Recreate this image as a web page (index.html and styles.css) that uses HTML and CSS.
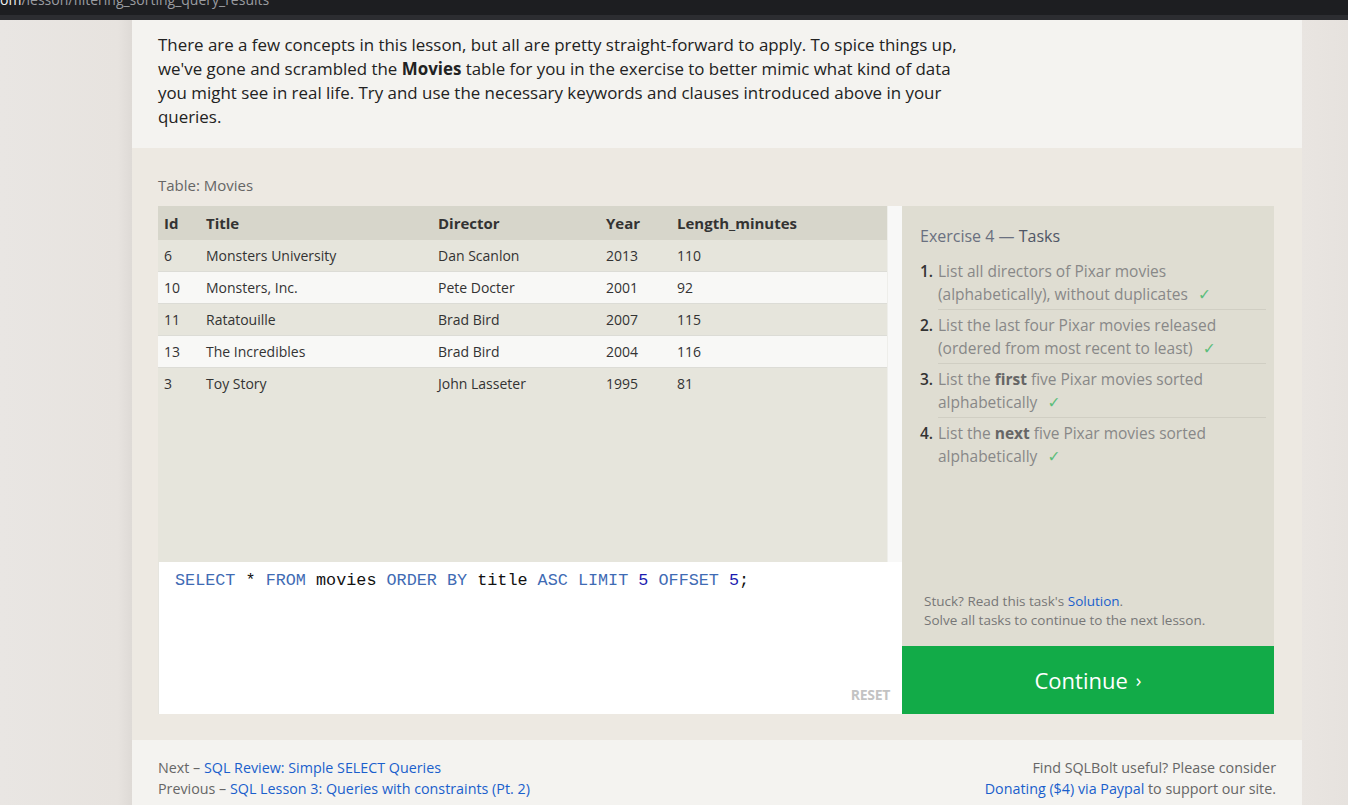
FILE: index.html
```html
<!DOCTYPE html>
<html>
<head>
<meta charset="utf-8">
<link rel="stylesheet" href="styles.css">
</head>
<body>
<div class="urlbar"><div class="urltext"><span class="host">om</span>/lesson/filtering_sorting_query_results</div></div>
<div class="urlstrip"></div>
<div class="page">
  <section class="intro">
    <p>There are a few concepts in this lesson, but all are pretty straight-forward to apply. To spice things up, we've gone and scrambled the <b>Movies</b> table for you in the exercise to better mimic what kind of data you might see in real life. Try and use the necessary keywords and clauses introduced above in your queries.</p>
  </section>
  <section class="exercise">
    <div class="label">Table: Movies</div>
    <div class="workspace">
      <div class="left">
        <div class="tablewrap">
          <div class="tablearea">
            <table class="movies">
              <thead>
                <tr><th class="c-id">Id</th><th class="c-title">Title</th><th class="c-dir">Director</th><th class="c-year">Year</th><th>Length_minutes</th></tr>
              </thead>
              <tbody>
                <tr><td>6</td><td>Monsters University</td><td>Dan Scanlon</td><td>2013</td><td>110</td></tr>
                <tr><td>10</td><td>Monsters, Inc.</td><td>Pete Docter</td><td>2001</td><td>92</td></tr>
                <tr><td>11</td><td>Ratatouille</td><td>Brad Bird</td><td>2007</td><td>115</td></tr>
                <tr><td>13</td><td>The Incredibles</td><td>Brad Bird</td><td>2004</td><td>116</td></tr>
                <tr><td>3</td><td>Toy Story</td><td>John Lasseter</td><td>1995</td><td>81</td></tr>
              </tbody>
            </table>
          </div>
          <div class="scrollgutter"></div>
        </div>
        <div class="editor">
          <div class="code"><span class="kw">SELECT</span> * <span class="kw">FROM</span> movies <span class="kw">ORDER BY</span> title <span class="kw">ASC</span> <span class="kw">LIMIT</span> <span class="num">5</span> <span class="kw">OFFSET</span> <span class="num">5</span>;</div>
          <div class="reset">RESET</div>
        </div>
      </div>
      <div class="right">
        <div class="tasks">
          <h3><span class="ex">Exercise 4 —</span> Tasks</h3>
          <ol>
            <li><span class="n">1.</span><span class="t">List all directors of Pixar movies (alphabetically), without duplicates <span class="chk">✓</span></span></li>
            <li><span class="n">2.</span><span class="t">List the last four Pixar movies released (ordered from most recent to least) <span class="chk">✓</span></span></li>
            <li><span class="n">3.</span><span class="t">List the <b>first</b> five Pixar movies sorted alphabetically <span class="chk">✓</span></span></li>
            <li><span class="n">4.</span><span class="t">List the <b>next</b> five Pixar movies sorted alphabetically <span class="chk">✓</span></span></li>
          </ol>
          <div class="help">
            <div>Stuck? Read this task's <a href="#">Solution</a>.</div>
            <div>Solve all tasks to continue to the next lesson.</div>
          </div>
        </div>
        <div class="continue">Continue <span class="arrow">›</span></div>
      </div>
    </div>
  </section>
  <section class="footer">
    <div class="nav">
      <div>Next – <a href="#">SQL Review: Simple SELECT Queries</a></div>
      <div>Previous – <a href="#">SQL Lesson 3: Queries with constraints (Pt. 2)</a></div>
    </div>
    <div class="donate">
      <div>Find SQLBolt useful? Please consider</div>
      <div><a href="#">Donating ($4) via Paypal</a> to support our site.</div>
    </div>
  </section>
</div>
</body>
</html>
```
FILE: styles.css
```css
html, body {
  margin: 0;
  padding: 0;
}
body {
  background: linear-gradient(to right, #e9e6e3 0, #e7e3df 118px, #dedad6 132px, #e9e5e1 1302px, #e6e2de 1348px);
  font-family: "Open Sans", "DejaVu Sans", sans-serif;
  color: #333;
  height: 805px;
  overflow: hidden;
}
a {
  color: #1a5fcc;
  text-decoration: none;
}
.urlbar {
  height: 15px;
  background: #1d1e21;
  overflow: hidden;
}
.urltext {
  font-family: "Open Sans", sans-serif;
  font-size: 14px;
  line-height: 20px;
  margin-top: -10px;
  color: #9a9ca0;
}
.urltext .host {
  color: #f0f0f0;
}
.urlstrip {
  height: 5px;
  background: #2c2d31;
}
.page {
  width: 1170px;
  margin-left: 132px;
}
.intro {
  background: #f4f3f0;
  padding: 13px 26px 19px;
}
.intro p {
  margin: 0;
  width: 810px;
  font-size: 16.9px;
  line-height: 24px;
  color: #222;
}
.intro b {
  font-weight: 700;
}
.exercise {
  background: #ede9e2;
  padding: 27px 28px 26px 26px;
}
.label {
  font-size: 15px;
  line-height: 20px;
  color: #666;
  margin-bottom: 11px;
}
.workspace {
  display: flex;
}
.left {
  width: 744px;
  display: flex;
  flex-direction: column;
}
.tablewrap {
  height: 356px;
  display: flex;
}
.tablearea {
  flex: 1;
  background: #e6e5dc;
}
.scrollgutter {
  width: 14px;
  background: #f8f8f7;
  border-left: 1px solid #eeeeea;
}
.movies {
  width: 100%;
  border-collapse: collapse;
  font-size: 14px;
  color: #333;
}
.movies th {
  background: #d7d6cb;
  text-align: left;
  font-weight: 700;
  font-size: 15px;
  height: 34px;
  padding: 0;
  color: #333;
}
.movies td {
  height: 31px;
  padding: 0;
  border-bottom: 1px solid #dcdcd6;
}
.movies th:first-child, .movies td:first-child {
  padding-left: 6px;
}
.movies tbody tr:nth-child(odd) {
  background: #e6e5dc;
}
.movies tbody tr:nth-child(even) {
  background: #f8f8f6;
}
.movies tbody tr:last-child td {
  border-bottom: none;
}
.c-id { width: 42px; }
.c-title { width: 232px; }
.c-dir { width: 168px; }
.c-year { width: 71px; }
.editor {
  height: 152px;
  background: #fff;
  border-left: 1px solid #e6e5df;
  box-sizing: border-box;
  display: flex;
  flex-direction: column;
  justify-content: space-between;
  padding: 9px 12px 10px 16px;
}
.code {
  font-family: "Liberation Mono", "Courier New", monospace;
  font-size: 16.8px;
  line-height: 20px;
  color: #111;
}
.kw {
  color: #3f6bb4;
}
.num {
  color: #1a1ab0;
}
.reset {
  align-self: flex-end;
  font-weight: 700;
  font-size: 14px;
  color: #c3c3c3;
  letter-spacing: -0.3px;
}
.right {
  width: 372px;
  display: flex;
  flex-direction: column;
}
.tasks {
  height: 440px;
  box-sizing: border-box;
  background: #dfddd2;
  padding: 18px 8px 16px 18px;
  display: flex;
  flex-direction: column;
}
.tasks h3 {
  margin: 0 0 12px;
  font-size: 16px;
  line-height: 24px;
  font-weight: 400;
  color: #4f5666;
}
.tasks h3 .ex {
  color: #6a7080;
}
.tasks ol {
  list-style: none;
  margin: 0;
  padding: 0;
  flex: 1;
}
.tasks li {
  display: flex;
  font-size: 15.5px;
  line-height: 23px;
  color: #888;
  padding: 0 0 4px;
  margin-bottom: 4px;
  position: relative;
}
.tasks li::after {
  content: "";
  position: absolute;
  left: 18px;
  right: 0;
  bottom: 0;
  border-bottom: 1px solid #d0cec3;
}
.tasks li:last-child::after {
  display: none;
}
.tasks .n {
  width: 18px;
  flex: none;
  color: #333;
  font-weight: 600;
}
.tasks .t {
  width: 300px;
}
.tasks b {
  color: #666;
  font-weight: 700;
}
.chk {
  color: #5dbd7b;
  margin-left: 6px;
}
.help {
  font-size: 13.5px;
  line-height: 19px;
  color: #777;
  padding-left: 4px;
}
.continue {
  height: 68px;
  background: #12ab48;
  color: #fff;
  font-size: 22px;
  display: flex;
  align-items: center;
  justify-content: center;
  gap: 8px;
}
.continue .arrow {
  font-size: 19px;
}
.footer {
  background: #f4f3f0;
  padding: 17px 26px 0;
  height: 65px;
  box-sizing: border-box;
  display: flex;
  justify-content: space-between;
  font-size: 14.3px;
  line-height: 21px;
  color: #666;
}
.donate {
  text-align: right;
}
```
